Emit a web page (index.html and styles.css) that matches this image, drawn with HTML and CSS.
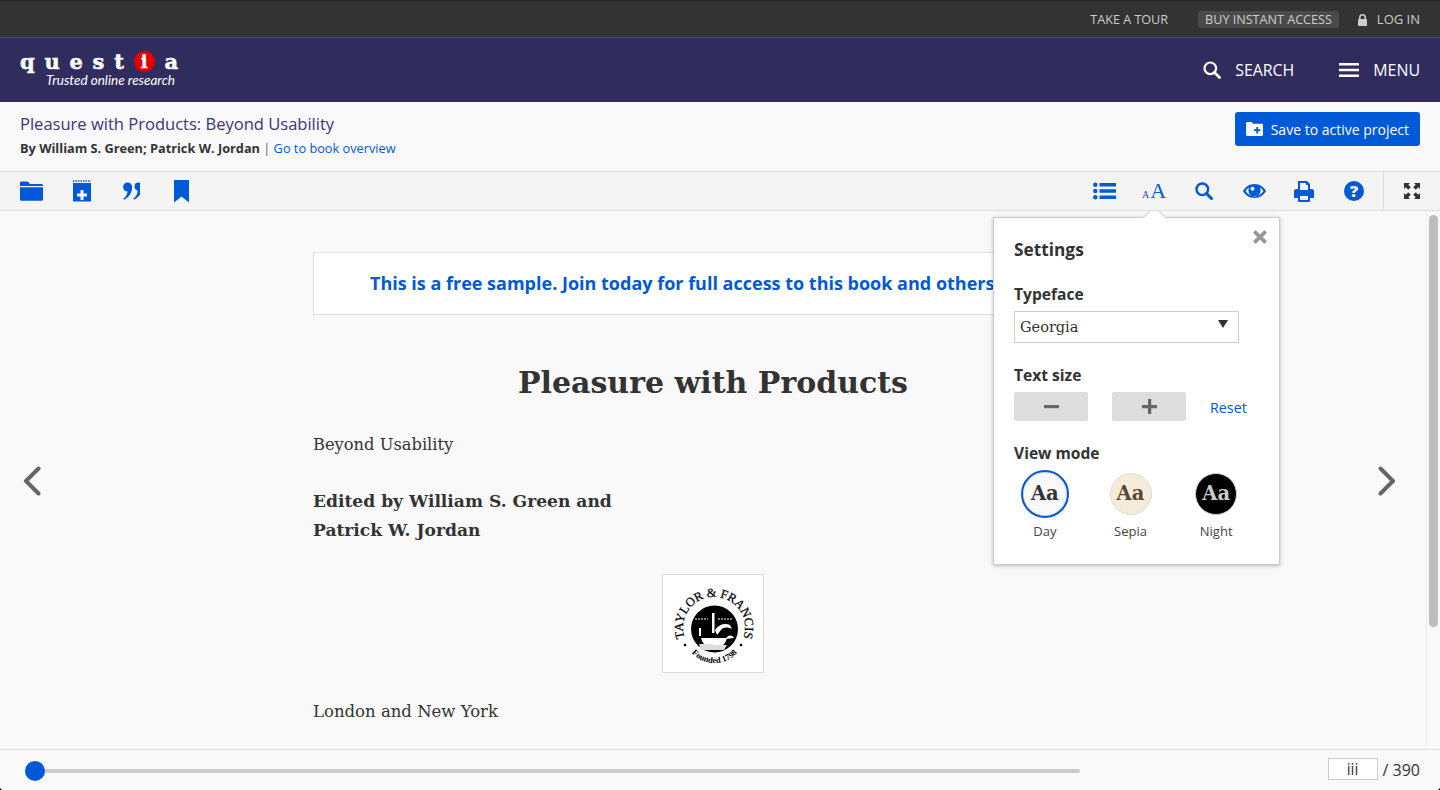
FILE: index.html
```html
<!DOCTYPE html>
<html lang="en">

<head>
    <meta charset="UTF-8">
    <title>Pleasure with Products: Beyond Usability</title>
    <link rel="stylesheet" href="styles.css">
</head>

<body>
    <div class="app">
        <div class="topbar">
            <a href="#" class="top-link">TAKE A TOUR</a>
            <a href="#" class="top-link top-buy">BUY INSTANT ACCESS</a>
            <a href="#" class="top-link top-login">
                <svg width="9" height="12" viewBox="0 0 9 12"><path fill="#ccc" d="M1 5V3.500a3.500 3.500 0 0 1 7 0V5h.2c.5 0 .8.3.8.8v5.400c0 .5-.3.8-.8.8H.8c-.5 0-.8-.3-.8-.8V5.800C0 5.300.3 5 .8 5zm1.600 0h3.800V3.500a1.900 1.900 0 0 0-3.800 0z"/></svg>
                LOG IN
            </a>
        </div>

        <div class="navbar">
            <a href="#" class="logo">
                <span class="logo-word"><span>q</span><span>u</span><span>e</span><span>s</span><span>t</span><span class="logo-i">i</span><span>a</span></span>
                <span class="logo-tag">Trusted online research</span>
            </a>
            <div class="nav-right">
                <a href="#" class="nav-link nav-search">
                    <svg width="18" height="18" viewBox="0 0 18 18"><circle cx="7.300" cy="7.300" r="5.800" fill="none" stroke="#fff" stroke-width="2.200"/><path d="M11.500 11.500l5 5" stroke="#fff" stroke-width="2.800" stroke-linecap="round"/></svg>
                    SEARCH
                </a>
                <a href="#" class="nav-link nav-menu">
                    <svg width="20" height="16" viewBox="0 0 20 16"><path fill="#fff" d="M0 1h20v2.600H0zM0 6.700h20v2.600H0zM0 12.400h20V15H0z"/></svg>
                    MENU
                </a>
            </div>
        </div>

        <div class="book-head">
            <div>
                <h1 class="book-title">Pleasure with Products: Beyond Usability</h1>
                <p class="book-by"><b>By William S. Green; Patrick W. Jordan</b> <span class="sep">|</span> <a href="#">Go to book overview</a></p>
            </div>
            <a href="#" class="save-btn">
                <svg width="17" height="14" viewBox="0 0 17 14"><path fill-rule="evenodd" fill="#fff" d="M0 1.200C0 .5.500 0 1.200 0h4.300l1.600 1.700h8.700c.7 0 1.200.5 1.200 1.200v9.900c0 .7-.5 1.200-1.200 1.200H1.200C.5 14 0 13.500 0 12.800zM10.300 5v2.300H8v1.800h2.300v2.300h1.800V9.100h2.300V7.300h-2.300V5z"/></svg>
                Save to active project
            </a>
        </div>

        <div class="toolbar">
            <div class="tool-group">
                <a href="#" class="tool">
                    <svg width="23" height="20" viewBox="0 0 23 20"><path fill="#0059d6" d="M0 2C0 1 .6.500 1.500.500h6.300L10 3H21.500C22.400 3 23 3.600 23 4.500v.5H0zM0 6.200h23v12c0 .9-.6 1.500-1.500 1.500h-20C.6 19.700 0 19.100 0 18.200z"/></svg>
                </a>
                <a href="#" class="tool tool-note">
                    <svg width="18" height="22" viewBox="0 0 18 22"><path fill-rule="evenodd" fill="#0059d6" d="M0 3h18v18.500H0zM7.500 10v3.500H4v3h3.500V20h3v-3.500H14v-3h-3.500V10z"/><path stroke="#0059d6" stroke-width="1.600" stroke-dasharray="1.500 1" d="M0 1h18"/></svg>
                </a>
                <a href="#" class="tool">
                    <svg width="17" height="18" viewBox="0 0 17 18"><g fill="#0059d6"><circle cx="4.600" cy="5" r="4.500"/><path d="M9.100 5C9.300 10.500 6 15.500 1 17.800L.3 16.500C3 15 4.300 12.500 4.600 8.500z"/><circle cx="15.500" cy="4.500" r="4"/><path d="M19 5C19.200 10.500 16 15.500 11 17.800L10.300 16.500C13 15 14.300 12.500 14.600 8.500z"/></g></svg>
                </a>
                <a href="#" class="tool">
                    <svg width="15" height="23" viewBox="0 0 15 23"><path fill="#0059d6" d="M0 0h15v22.500l-7.500-6-7.500 6z"/></svg>
                </a>
            </div>
            <div class="tool-group tool-right">
                <a href="#" class="tool">
                    <svg width="23" height="18" viewBox="0 0 23 18"><g fill="#0059d6"><circle cx="2.300" cy="2.800" r="2.200"/><circle cx="2.300" cy="9" r="2.200"/><circle cx="2.300" cy="15.200" r="2.200"/><path d="M6.500 1H23v3.400H6.500zM6.500 7.300H23v3.400H6.500zM6.500 13.600H23V17H6.500z"/></g></svg>
                </a>
                <a href="#" class="tool tool-type"><span class="type-small">A</span><span class="type-big">A</span></a>
                <a href="#" class="tool">
                    <svg width="18" height="18" viewBox="0 0 18 18"><circle cx="7.300" cy="7.300" r="5.800" fill="none" stroke="#0059d6" stroke-width="2.400"/><path d="M11.500 11.500l5 5" stroke="#0059d6" stroke-width="3" stroke-linecap="round"/></svg>
                </a>
                <a href="#" class="tool">
                    <svg width="23" height="14" viewBox="0 0 23 14"><path fill-rule="evenodd" fill="#0059d6" d="M11.500 0C16.500 0 20.800 2.800 23 7c-2.200 4.200-6.500 7-11.500 7S2.200 11.200 0 7C2.200 2.800 6.500 0 11.500 0zM2.500 7c1.900 3 5.200 5 9 5s7.100-2 9-5c-1-1.500-2.200-2.700-3.700-3.600.5.900.8 1.900.8 3a6.100 6.100 0 0 1-12.200 0c0-1.100.3-2.100.8-3C4.700 4.300 3.500 5.500 2.500 7z"/><circle cx="9.500" cy="4.800" r="2" fill="#f4f4f4"/></svg>
                </a>
                <a href="#" class="tool">
                    <svg width="20" height="21" viewBox="0 0 20 21"><path fill-rule="evenodd" fill="#0059d6" d="M4 0h9l3 3v5h1.500C19 8 20 9 20 10.500V16c0 .6-.4 1-1 1h-3v3c0 .6-.4 1-1 1H5c-.6 0-1-.4-1-1v-3H1c-.6 0-1-.4-1-1v-5.500C0 9 1 8 2.500 8H4zM6 2v7h8V4h-2V2zM6 15v4h8v-4z"/></svg>
                </a>
                <a href="#" class="tool">
                    <svg width="20" height="20" viewBox="0 0 20 20"><circle cx="10" cy="10" r="10" fill="#0059d6"/><text x="10" y="15.800" class="help-mark">?</text></svg>
                </a>
            </div>
            <a href="#" class="tool tool-full">
                <svg width="16" height="16" viewBox="0 0 16 16"><path fill="#333" d="M0 0h6L4.300 1.700 6.800 4.200 4.200 6.800 1.700 4.300 0 6zM16 0v6l-1.700-1.700-2.500 2.500-2.600-2.600 2.500-2.500L10 0zM0 16v-6l1.700 1.700 2.500-2.500 2.600 2.600-2.500 2.500L6 16zM16 16h-6l1.700-1.700-2.500-2.500 2.600-2.600 2.500 2.500L16 10z"/></svg>
            </a>
        </div>

        <div class="reader">
            <div class="page-nav">
                <svg width="18" height="30" viewBox="0 0 18 30"><path d="M15.500 2.500L3 15l12.500 12.500" fill="none" stroke="#666" stroke-width="4" stroke-linecap="round" stroke-linejoin="round"/></svg>
            </div>

            <div class="page">
                <div class="sample-note"><a href="#">This is a free sample. Join today for full access to this book and others.</a></div>
                <h2 class="page-title">Pleasure with Products</h2>
                <p class="page-sub">Beyond Usability</p>
                <p class="page-eds">Edited by William S. Green and<br>Patrick W. Jordan</p>
                <div class="publisher">
                    <svg width="100" height="97" viewBox="0 0 100 97">
                        <defs>
                            <path id="arc-top" d="M21.700 63A31 31 0 1 1 80.300 63"/>
                            <path id="arc-bottom" d="M23.300 70A31 31 0 0 0 79.700 70"/>
                        </defs>
                        <text class="pub-ring"><textPath href="#arc-top" startOffset="50%" text-anchor="middle">TAYLOR &amp; FRANCIS</textPath></text>
                        <text class="pub-founded"><textPath href="#arc-bottom" startOffset="50%" text-anchor="middle">Founded 1798</textPath></text>
                        <circle cx="51.500" cy="54" r="23.500" fill="#000"/>
                        <path d="M38 63h26c-2 7-6 10-13 10s-11-3-13-10z" fill="#fff"/>
                        <path d="M36 69h14v6H38zM50 70h14l-3 5H50z" fill="#ddd"/>
                        <path d="M49 38h2.500v20H49z" fill="#fff"/>
                        <path d="M52 55c4-6 10-7 15-5l2 4c-5-2-8-2-11 1l-4 5z" fill="#fff"/>
                        <path d="M63 64c1-4 6-5 8-1z" fill="#fff"/>
                        <path d="M36 53h2v8h-2z" fill="#fff"/>
                        <path d="M32 44h13M55 44h14" stroke="#fff" stroke-width="1.200" stroke-dasharray="2 1"/>
                        <circle cx="22" cy="70" r="1.300" fill="#000"/>
                        <circle cx="78" cy="70" r="1.300" fill="#000"/>
                    </svg>
                </div>
                <p class="page-city">London and New York</p>
            </div>

            <div class="page-nav page-nav-next">
                <svg width="18" height="30" viewBox="0 0 18 30"><path d="M2.500 2.500L15 15 2.500 27.500" fill="none" stroke="#666" stroke-width="4" stroke-linecap="round" stroke-linejoin="round"/></svg>
            </div>

            <div class="scroll-track"><div class="scroll-thumb"></div></div>

            <div class="settings">
                <span class="settings-arrow"></span>
                <a href="#" class="settings-close">
                    <svg width="16" height="16" viewBox="0 0 14 14"><path d="M2 2l10 10M12 2L2 12" stroke="#999" stroke-width="3.400"/></svg>
                </a>
                <h3 class="settings-title">Settings</h3>
                <h4 class="settings-label label-face">Typeface</h4>
                <div class="select-box">Georgia<span class="select-caret"></span></div>
                <h4 class="settings-label label-size">Text size</h4>
                <div class="size-row">
                    <a href="#" class="size-btn"><svg width="15" height="15" viewBox="0 0 15 15"><path fill="#666" d="M0 6h15v3.200H0z"/></svg></a>
                    <a href="#" class="size-btn"><svg width="15" height="15" viewBox="0 0 15 15"><path fill="#666" d="M6 0h3.200v6H15v3.200H9.200V15H6V9.200H0V6h6z"/></svg></a>
                    <a href="#" class="size-reset">Reset</a>
                </div>
                <h4 class="settings-label label-mode">View mode</h4>
                <div class="mode-row">
                    <div class="mode mode-day"><span class="mode-dot">Aa</span>Day</div>
                    <div class="mode mode-sepia"><span class="mode-dot">Aa</span>Sepia</div>
                    <div class="mode mode-night"><span class="mode-dot">Aa</span>Night</div>
                </div>
            </div>
        </div>

        <div class="footer">
            <div class="slider"><span class="slider-thumb"></span></div>
            <div class="pager"><span class="pager-input">iii</span> / 390</div>
        </div>
    </div>
</body>

</html>
```

FILE: styles.css
```css
*{
    margin: 0;
    padding: 0;
    box-sizing: border-box;
}
html,body{
    height: 100%;
    overflow: hidden;
    background: #000;
}
body{
    font-family: "Open Sans", "Liberation Sans", sans-serif;
    color: #333;
}
a{
    text-decoration: none;
    color: #0059d6;
}
.app{
    height: 790px;
    display: flex;
    flex-direction: column;
    background: #f9f9f9;
    border-radius: 0 0 4px 4px;
    overflow: hidden;
}

/* top strip */
.topbar{
    height: 38px;
    flex: none;
    display: flex;
    justify-content: flex-end;
    align-items: center;
    padding-right: 20px;
    background: #333;
    border-top: 1px solid #242424;
    border-bottom: 1px solid #4a4a6a;
}
.top-link{
    font-size: 12.600px;
    color: #ccc;
    line-height: 17px;
}
.top-buy{
    margin-left: 30px;
    padding: 0 7px;
    background: #4a4a4a;
    border-radius: 3px;
}
.top-login{
    margin-left: 19px;
    display: flex;
    align-items: center;
    gap: 10px;
    padding-top: 1px;
    font-size: 13px;
}

/* navy bar */
.navbar{
    height: 64px;
    flex: none;
    display: flex;
    justify-content: space-between;
    align-items: center;
    padding: 0 20px;
    background: #312c5e;
}
.logo{
    display: block;
    color: #fff;
    margin-top: -3px;
}
.logo-word{
    display: flex;
    align-items: center;
    width: 158px;
    justify-content: space-between;
    font-family: "DejaVu Serif", serif;
    font-weight: bold;
    font-size: 21px;
    line-height: 23px;
    -webkit-text-stroke: 0.5px #fff;
}
.logo-i{
    width: 21px;
    height: 21px;
    border-radius: 50%;
    background: #e30000;
    text-align: center;
    font-size: 18px;
    line-height: 21px;
}
.logo-tag{
    display: block;
    margin: 0 0 0 26px;
    font-family: Lato, "Open Sans", sans-serif;
    font-size: 13.500px;
    font-style: italic;
    line-height: 15px;
    white-space: nowrap;
}
.nav-right{
    display: flex;
    align-items: center;
}
.nav-link{
    display: flex;
    align-items: center;
    color: #fff;
    font-size: 15.900px;
}
.nav-search svg{
    margin-right: 14px;
}
.nav-menu{
    margin-left: 45px;
}
.nav-menu svg{
    margin-right: 14px;
}

/* title + save */
.book-head{
    height: 69px;
    flex: none;
    display: flex;
    justify-content: space-between;
    align-items: flex-start;
    padding: 10px 20px 0;
    background: #f9f9f9;
}
.book-title{
    font-size: 16.550px;
    font-weight: normal;
    line-height: 24px;
    color: #3d3285;
}
.book-by{
    margin-top: 3px;
    font-size: 12.750px;
    line-height: 18px;
}
.book-by b{
    font-weight: 700;
}
.sep{
    color: #666;
}
.save-btn{
    display: flex;
    align-items: center;
    gap: 8px;
    height: 34px;
    padding: 0 11px;
    background: #0059d6;
    border-radius: 3px;
    color: #fff;
    font-size: 14px;
    font-weight: 500;
}

/* icon row */
.toolbar{
    height: 40px;
    flex: none;
    display: flex;
    align-items: stretch;
    padding-left: 6px;
    background: #f4f4f4;
    border-top: 1px solid #ddd;
    border-bottom: 1px solid #ddd;
}
.tool-group{
    display: flex;
}
.tool-right{
    margin-left: auto;
    margin-right: 4px;
}
.tool{
    width: 50px;
    display: flex;
    align-items: center;
    justify-content: center;
}
.tool-note{
    padding-left: 2px;
}
.tool-type{
    align-items: baseline;
    padding-top: 5px;
    font-family: "Liberation Serif", serif;
}
.type-small{
    font-size: 10px;
    margin-right: 1px;
}
.type-big{
    font-size: 22px;
    line-height: 28px;
}
.help-mark{
    font-family: "Open Sans", sans-serif;
    font-weight: 800;
    font-size: 16px;
    fill: #f4f4f4;
    text-anchor: middle;
}
.tool-full{
    width: 57px;
    border-left: 1px solid #ddd;
}

/* reading area */
.reader{
    flex: 1;
    min-height: 0;
    display: flex;
    position: relative;
    overflow: hidden;
}
.page-nav{
    width: 313px;
    flex: none;
    display: flex;
    align-items: center;
    padding: 2px 0 0 23px;
}
.page-nav-next{
    width: auto;
    flex: 1;
    justify-content: flex-end;
    padding: 2px 30px 0 0;
}
.page{
    width: 800px;
    flex: none;
    padding-top: 41px;
    font-family: "DejaVu Serif", serif;
}
.sample-note{
    height: 63px;
    display: flex;
    align-items: center;
    padding: 0 0 2px 56px;
    background: #fff;
    border: 1px solid #ddd;
    font-family: "Open Sans", sans-serif;
    font-size: 18px;
    font-weight: 700;
    white-space: nowrap;
    overflow: hidden;
}
.page-title{
    margin-top: 45px;
    text-align: center;
    font-size: 30px;
    line-height: 46px;
    color: #333;
}
.page-sub{
    margin-top: 24px;
    font-size: 16.300px;
    line-height: 29px;
}
.page-eds{
    margin-top: 28px;
    font-size: 17.100px;
    font-weight: bold;
    line-height: 29px;
}
.publisher{
    width: 102px;
    height: 99px;
    margin: 29px auto 0;
    background: #fff;
    border: 1px solid #ddd;
}
.pub-ring{
    font-family: "Liberation Serif", serif;
    font-size: 12.500px;
    stroke: #000;
    stroke-width: 0.25;
    fill: #000;
}
.pub-founded{
    font-family: "Liberation Serif", serif;
    font-size: 8.500px;
    font-weight: bold;
    fill: #000;
}
.page-city{
    margin-top: 24px;
    font-size: 16.500px;
    line-height: 29px;
}
.scroll-track{
    width: 14px;
    flex: none;
    padding: 4px 2px 0 2px;
    border-left: 1px solid #eee;
}
.scroll-thumb{
    width: 9px;
    height: 412px;
    background: #bdbdbd;
    border-radius: 5px;
}

/* settings popover */
.settings{
    position: absolute;
    left: 993px;
    top: 6px;
    width: 287px;
    height: 348px;
    padding: 20px 20px 0;
    background: #fff;
    border: 1px solid #ccc;
    box-shadow: 0 1px 4px rgba(0,0,0,0.25);
}
.settings-arrow{
    position: absolute;
    left: 152px;
    top: -9px;
    width: 17px;
    height: 17px;
    background: #fff;
    border-left: 1px solid #ccc;
    border-top: 1px solid #ccc;
    transform: rotate(45deg);
}
.settings-close{
    position: absolute;
    right: 11px;
    top: 11px;
    line-height: 0;
}
.settings-title{
    font-size: 17.300px;
    font-weight: 700;
    line-height: 24px;
}
.settings-label{
    margin-top: 20px;
    font-size: 15.600px;
    font-weight: 700;
    line-height: 22px;
}
.label-face{
    margin-top: 21px;
}
.select-box{
    position: relative;
    width: 225px;
    height: 32px;
    margin-top: 6px;
    padding-left: 5px;
    border: 1px solid #ccc;
    font-family: "DejaVu Serif", serif;
    font-size: 14.500px;
    line-height: 30px;
}
.select-caret{
    position: absolute;
    right: 10px;
    top: 8px;
    border-left: 5px solid transparent;
    border-right: 5px solid transparent;
    border-top: 8px solid #333;
}
.label-size{
    margin-top: 21px;
}
.size-row{
    display: flex;
    align-items: center;
    margin-top: 6px;
}
.size-btn{
    width: 74px;
    height: 29px;
    display: flex;
    align-items: center;
    justify-content: center;
    margin-right: 24px;
    background: #ddd;
    border-radius: 2px;
}
.size-reset{
    font-size: 14.300px;
    margin-top: 2px;
}
.label-mode{
    margin-top: 21px;
}
.mode-row{
    display: flex;
    margin-top: 6px;
}
.mode{
    width: 86px;
    display: flex;
    flex-direction: column;
    align-items: center;
    font-size: 13px;
    line-height: 18px;
    color: #444;
}
.mode-dot{
    width: 42px;
    height: 42px;
    margin: 3px 0 7px;
    display: flex;
    align-items: center;
    justify-content: center;
    border-radius: 50%;
    border: 1px solid #ddd;
    font-family: "DejaVu Serif", serif;
    font-size: 19.500px;
    font-weight: bold;
}
.mode-day{
    margin-left: -12px;
}
.mode-day .mode-dot{
    width: 48px;
    height: 48px;
    margin: 0 0 4px;
    background: #f9f9f9;
    border: 2px solid #0059d6;
    box-shadow: inset 0 0 0 1px #ddd;
    color: #333;
}
.mode-sepia .mode-dot{
    background: #f4ecd8;
    color: #5b4636;
}
.mode-night .mode-dot{
    background: #000;
    border-color: #ccc;
    color: #ccc;
}

/* slider + page number */
.footer{
    height: 41px;
    flex: none;
    display: flex;
    justify-content: space-between;
    align-items: center;
    padding: 0 20px 0 25px;
    border-top: 1px solid #ddd;
    background: #f9f9f9;
}
.slider{
    position: relative;
    width: 1055px;
    height: 4px;
    margin: 1px 0 0 0;
    background: #ccc;
    border-radius: 2px;
}
.slider-thumb{
    position: absolute;
    left: 0;
    top: -8px;
    width: 20px;
    height: 20px;
    border-radius: 50%;
    background: #0059d6;
}
.pager{
    display: flex;
    align-items: center;
    gap: 5px;
    font-size: 16px;
}
.pager-input{
    width: 50px;
    height: 22px;
    margin-top: -3px;
    line-height: 20px;
    text-align: center;
    background: #fff;
    border: 1px solid #ccc;
    font-size: 15.500px;
}
```
